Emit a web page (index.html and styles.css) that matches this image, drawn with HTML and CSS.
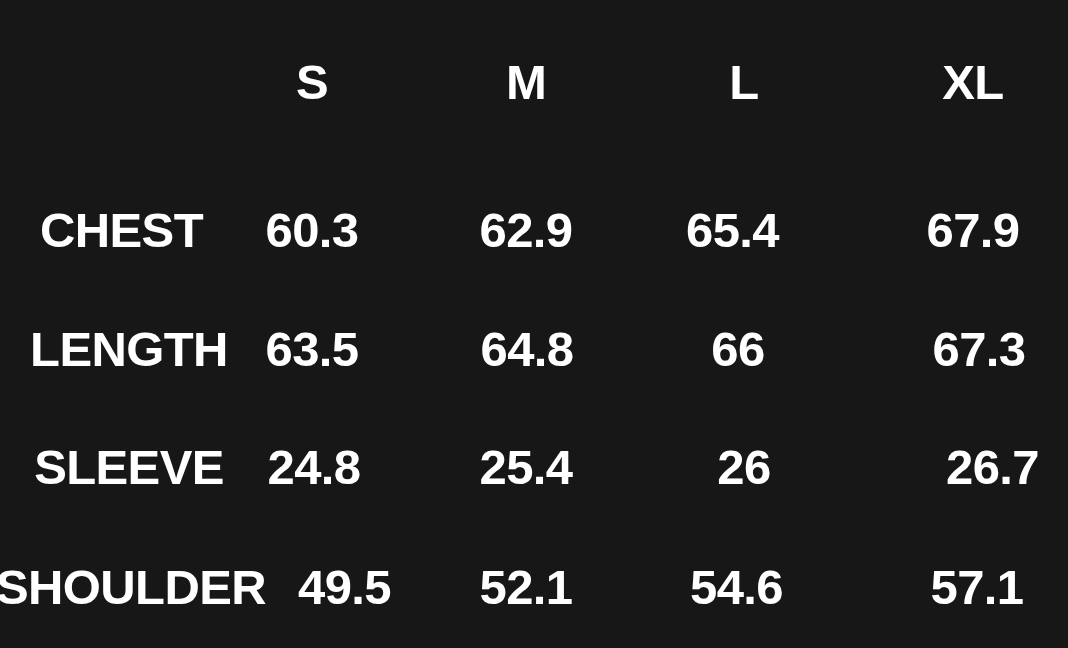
FILE: index.html
```html
<!DOCTYPE html>
<html lang="en">
<head>
<meta charset="utf-8">
<title>Size Chart</title>
<link rel="stylesheet" href="styles.css">
</head>
<body>
<main class="chart">
  <div class="cell label"></div>
  <div class="cell head">S</div>
  <div class="cell head">M</div>
  <div class="cell head r4">L</div>
  <div class="cell head l2">XL</div>

  <div class="cell label l8">CHEST</div>
  <div class="cell">60.3</div>
  <div class="cell">62.9</div>
  <div class="cell l8">65.4</div>
  <div class="cell l2">67.9</div>

  <div class="cell label">LENGTH</div>
  <div class="cell">63.5</div>
  <div class="cell r1">64.8</div>
  <div class="cell l2">66</div>
  <div class="cell r4">67.3</div>

  <div class="cell label">SLEEVE</div>
  <div class="cell r2">24.8</div>
  <div class="cell">25.4</div>
  <div class="cell r4">26</div>
  <div class="cell r17">26.7</div>

  <div class="cell label r2">SHOULDER</div>
  <div class="cell r32">49.5</div>
  <div class="cell">52.1</div>
  <div class="cell l4">54.6</div>
  <div class="cell r2">57.1</div>
</main>
</body>
</html>
```

FILE: styles.css
```css
html, body {
  margin: 0;
  padding: 0;
  background: #171717;
  overflow: hidden;
}

body {
  width: 1068px;
  height: 648px;
  font-family: "Liberation Sans", Arial, Helvetica, sans-serif;
  font-weight: 700;
  color: #ffffff;
}

.chart {
  display: grid;
  grid-template-columns: 258px 108px 320px 108px 362px;
  grid-template-rows: 148px 119px 118px 120px 56px;
  align-items: start;
  justify-items: center;
  padding-top: 54px;
}

.cell {
  font-size: 49px;
  line-height: 56px;
  letter-spacing: -0.6px;
  white-space: nowrap;
  justify-self: center;
}

/* small optical shifts of centred cells (shift = half the margin) */
.r1 { margin-left: 2px; }
.r2 { margin-left: 4px; }
.r4 { margin-left: 8px; }
.r17 { margin-left: 35px; }
.r32 { margin-left: 65px; }
.l2 { margin-right: 4px; }
.l4 { margin-right: 7px; }
.l8 { margin-right: 15px; }
```
